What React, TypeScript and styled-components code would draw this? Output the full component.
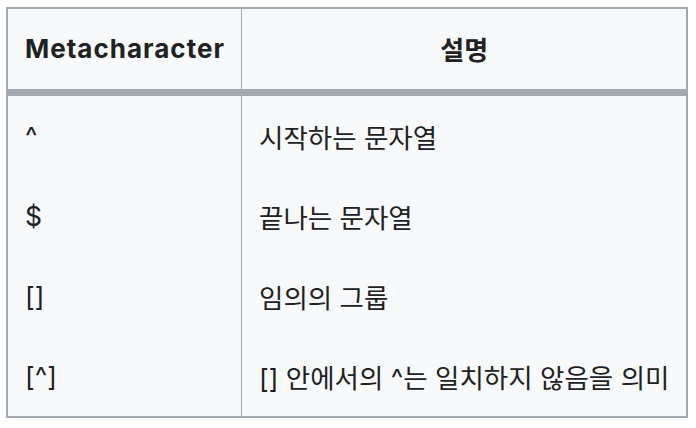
import styled, { createGlobalStyle } from "styled-components";

const GlobalStyle = createGlobalStyle`
  html, body {
    margin: 0;
    padding: 0;
    background: #ffffff;
  }
  body {
    font-family: Inter, "Noto Sans CJK KR", sans-serif;
    color: #202122;
  }
`;

const Page = styled.div`
  padding: 7px 0 0 6px;
`;

const Table = styled.div`
  display: grid;
  grid-template-columns: 234px 1fr;
  width: 682px;
  box-sizing: border-box;
  border: 2px solid #a2a9b1;
  background-color: #f8f9fa;
`;

const Head = styled.div<{ $center?: boolean; $first?: boolean }>`
  display: flex;
  align-items: center;
  justify-content: ${(p) => (p.$center ? "center" : "flex-start")};
  height: 87px;
  box-sizing: border-box;
  padding: 0 17px 2px;
  border-bottom: 7px solid #a2a9b1;
  border-right: ${(p) => (p.$first ? "1px solid #a2a9b1" : "0")};
  font-size: 26px;
  font-weight: 700;
  letter-spacing: ${(p) => (p.$first ? "1px" : "0")};
  white-space: nowrap;
`;

const Cell = styled.div<{ $first?: boolean }>`
  display: flex;
  align-items: center;
  height: 80px;
  box-sizing: border-box;
  padding: 0 17px;
  border-right: ${(p) => (p.$first ? "1px solid #a2a9b1" : "0")};
  font-size: 26.5px;
  white-space: nowrap;
`;

const rows = [
  { meta: "^", desc: "시작하는 문자열" },
  { meta: "$", desc: "끝나는 문자열" },
  { meta: "[]", desc: "임의의 그룹" },
  { meta: "[^]", desc: "[] 안에서의 ^는 일치하지 않음을 의미" },
];

export default function App() {
  return (
    <>
      <GlobalStyle />
      <Page>
        <Table>
          <Head $first>Metacharacter</Head>
          <Head $center>설명</Head>
          {rows.map((row) => (
            <>
              <Cell $first key={row.meta + "m"}>{row.meta}</Cell>
              <Cell key={row.meta + "d"}>{row.desc}</Cell>
            </>
          ))}
        </Table>
      </Page>
    </>
  );
}
